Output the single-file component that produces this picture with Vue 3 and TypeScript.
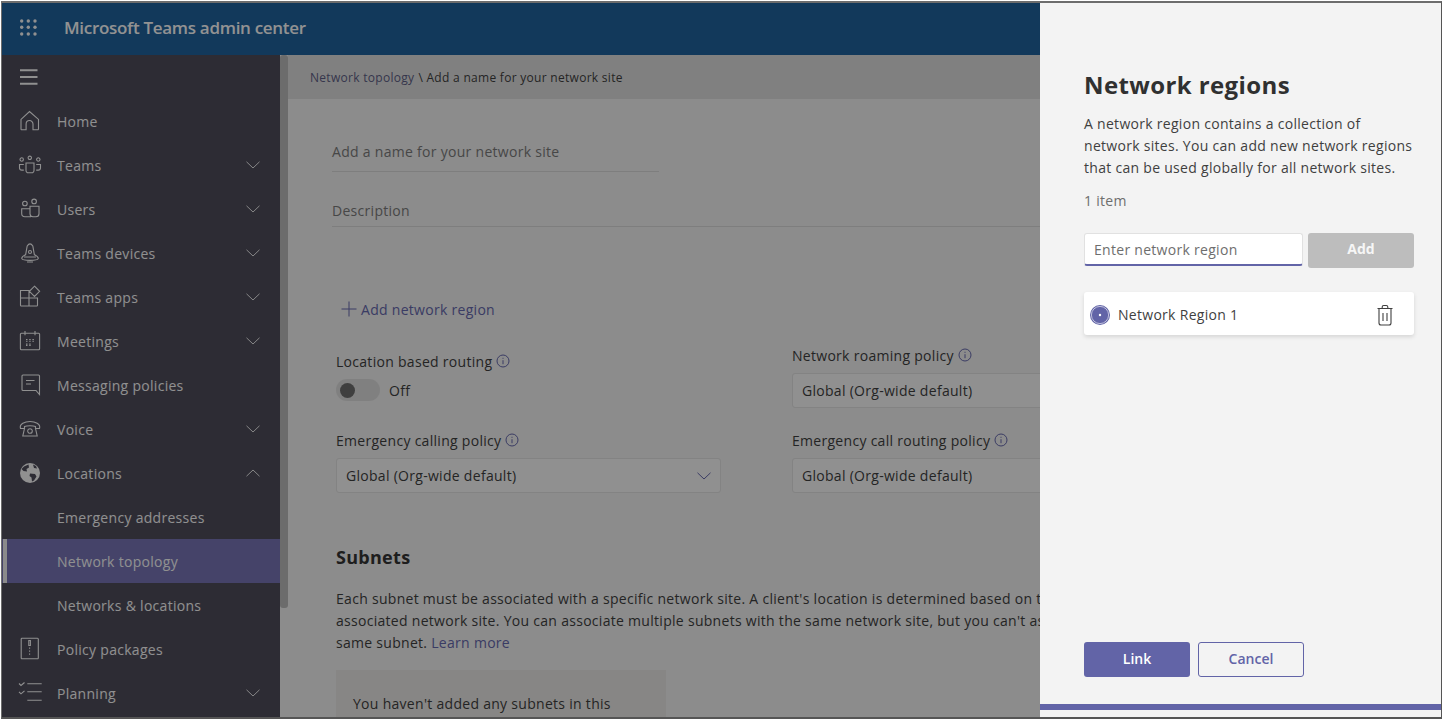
<script setup lang="ts">
import { ref } from 'vue'

interface NavItem {
  label: string
  icon?: string
  chevron?: 'down' | 'up'
  active?: boolean
}

// outline paths on a 24x24 box
const icons: Record<string, string[]> = {
  home: ['M3 20.5V10.4L11.5 2.6 20.5 10.4V20a.8.8 0 0 1-.8.8H15V15a3.4 3.4 0 0 0-6.9 0v5.8H3.8a.8.8 0 0 1-.8-.8Z'],
  teams: [
    'M5.4 6.5a1.7 1.7 0 1 0-3.4 0 1.7 1.7 0 1 0 3.4 0ZM13.5 4.8a1.7 1.7 0 1 0-3.4 0 1.7 1.7 0 1 0 3.4 0ZM22 6.5a1.7 1.7 0 1 0-3.4 0 1.7 1.7 0 1 0 3.4 0Z',
    'M8 10h8v7.5a2.3 2.3 0 0 1-2.3 2.3h-3.4A2.3 2.3 0 0 1 8 17.5ZM5.8 11.5H1.5v3.2a2.4 2.4 0 0 0 2.4 2.4h1.9M18.2 11.5h4.3v3.2a2.4 2.4 0 0 1-2.4 2.4h-1.9',
  ],
  users: [
    'M9.2 6.5a2.3 2.3 0 1 0-4.6 0 2.3 2.3 0 1 0 4.6 0ZM18.4 4.4a2.3 2.3 0 1 0-4.6 0 2.3 2.3 0 1 0 4.6 0Z',
    'M12 9.3h9v7.5a3 3 0 0 1-3 3h-3a3 3 0 0 1-3-3ZM12 11.8H3.7v4.8a3.2 3.2 0 0 0 3.2 3.2H13',
  ],
  devices: [
    'M9.2 5Q12 .8 14.8 5L16.4 13.8Q20.6 15.6 20.2 17.6 19.4 19.4 12 19.4 4.6 19.4 3.8 17.6 3.4 15.6 7.6 13.8Z',
    'M13.5 11a1.5 1.5 0 1 0-3 0 1.5 1.5 0 1 0 3 0ZM6 16h12M9 21h6',
  ],
  apps: ['M2.5 5.5H11v7.5H2.5ZM2.5 13H11v8H3.3a.8.8 0 0 1-.8-.8ZM11 13h8.5v7.2a.8.8 0 0 1-.8.8H11ZM16.5 1.2 21.6 6.3 16.5 11.4 11.4 6.3Z'],
  meetings: [
    'M3.4 4.3h17.2a1 1 0 0 1 1 1v14.4a1 1 0 0 1-1 1H3.4a1 1 0 0 1-1-1V5.300a1 1 0 0 1 1-1ZM7 2v4.200M17 2v4.200',
    'M8 10.500h1.500M11.200 10.500h1.500M14.400 10.500h1.500M8 12.200h1.500M11.200 12.200h1.500M14.400 12.200h1.500M8 15h1.500M11.200 15h1.500M8 16.400h1.500M11.200 16.400h1.500',
  ],
  messaging: ['M5 2h15.500a1 1 0 0 1 1 1V21.500L18 17.500H5a1 1 0 0 1-1-1V3a1 1 0 0 1 1-1ZM8 7.500h8.500M8 11h5'],
  voice: [
    'M2.500 11.500C1 7 7 4.500 12 4.500S23 7 21.500 11.500H17.500V9.500C15 8.500 9 8.500 6.500 9.500V11.500Z',
    'M6.500 11.500 4.800 19H19.200L17.500 11.500',
    'M14.300 14a2.300 2.300 0 1 0-4.600 0 2.300 2.300 0 1 0 4.600 0Z',
  ],
  packages: [
    'M4 1.300H19.500a.8.8 0 0 1 .8.8V21a.8.8 0 0 1-.8.8H4a.8.8 0 0 1-.8-.8V2.100a.8.8 0 0 1 .8-.8Z',
    'M10.800 3.500h1.600v5h-1.600ZM11.600 10.500v1.200M11.600 13.500v1.200M11.600 16.500v1.200',
  ],
  planning: ['M9.300 2.800H23.700M9.300 10.800H23.700M9.300 19.200H23.700M1 2.500l2 2L6.500 1.500M1 10.800l2 2 3.500-3'],
}

const navItems: NavItem[] = [
  { label: 'Home', icon: 'home' },
  { label: 'Teams', icon: 'teams', chevron: 'down' },
  { label: 'Users', icon: 'users', chevron: 'down' },
  { label: 'Teams devices', icon: 'devices', chevron: 'down' },
  { label: 'Teams apps', icon: 'apps', chevron: 'down' },
  { label: 'Meetings', icon: 'meetings', chevron: 'down' },
  { label: 'Messaging policies', icon: 'messaging' },
  { label: 'Voice', icon: 'voice', chevron: 'down' },
  { label: 'Locations', icon: 'globe', chevron: 'up' },
  { label: 'Emergency addresses' },
  { label: 'Network topology', active: true },
  { label: 'Networks & locations' },
  { label: 'Policy packages', icon: 'packages' },
  { label: 'Planning', icon: 'planning', chevron: 'down' },
]

const regionName = ref('')
</script>

<template>
  <div class="frame">
    <header class="topbar">
      <svg class="apps-grid" width="18" height="18" viewBox="0 0 18 18">
        <g v-for="y in [2, 8.300, 15]" :key="y">
          <circle v-for="x in [2.700, 9.300, 16]" :key="x" :cx="x" :cy="y" r="1.700" />
        </g>
      </svg>
      <span class="brand">Microsoft Teams admin center</span>
    </header>

    <div class="body">
      <nav class="sidebar">
        <div class="menu-row">
          <svg width="18" height="16" viewBox="0 0 18 16">
            <path d="M0 1.300h17.500M0 8h17.500M0 14.700h17.500" />
          </svg>
        </div>
        <a v-for="item in navItems" :key="item.label" :class="['nav-item', { active: item.active }]">
          <span class="nav-icon">
            <svg v-if="item.icon === 'globe'" width="24" height="24" viewBox="0 0 24 24">
              <circle class="globe" cx="12" cy="12" r="10" />
              <path class="land" d="M6 5.500 10.500 3.500 11 6.500 8.500 8 9 10.500 5.500 10 3.500 8ZM12 12.500l5 .5 1.500 2.500-2.500 4-2 1-.5-4-2-1.500ZM15 3.500l3 1.500 1 2.500-3-.5Z" />
            </svg>
            <svg v-else-if="item.icon" width="24" height="24" viewBox="0 0 24 24">
              <path v-for="d in icons[item.icon]" :key="d" :d="d" />
            </svg>
          </span>
          <span class="nav-label">{{ item.label }}</span>
          <svg v-if="item.chevron" :class="['chevron', item.chevron]" width="14" height="8" viewBox="0 0 14 8">
            <path d="M.5.800 7 7 13.500.800" />
          </svg>
        </a>
      </nav>
      <div class="side-scroll"><div class="side-thumb"></div></div>

      <main class="content">
        <div class="crumbs">
          <span class="crumb-link">Network topology</span>
          <span>\ Add a name for your network site</span>
        </div>

        <div class="form">
          <div class="line-field name-field">Add a name for your network site</div>
          <div class="line-field desc-field">Description</div>

          <div class="add-region">
            <svg width="16" height="16" viewBox="0 0 16 16"><path d="M8 .5v15M.5 8h15" /></svg>
            <span>Add network region</span>
          </div>

          <div class="settings">
            <div class="routing">
              <label class="field-label">
                Location based routing
                <svg class="info" width="14" height="14" viewBox="0 0 14 14">
                  <circle cx="7" cy="7" r="6" /><path d="M7 6.200v4M7 3.800v1" />
                </svg>
              </label>
              <div class="toggle-row">
                <span class="toggle"><span class="knob"></span></span>
                <span>Off</span>
              </div>
            </div>
            <div>
              <label class="field-label">
                Network roaming policy
                <svg class="info" width="14" height="14" viewBox="0 0 14 14">
                  <circle cx="7" cy="7" r="6" /><path d="M7 6.200v4M7 3.800v1" />
                </svg>
              </label>
              <div class="select">
                <span>Global (Org-wide default)</span>
                <svg width="14" height="8" viewBox="0 0 14 8"><path d="M.5.800 7 7 13.500.800" /></svg>
              </div>
            </div>
            <div>
              <label class="field-label">
                Emergency calling policy
                <svg class="info" width="14" height="14" viewBox="0 0 14 14">
                  <circle cx="7" cy="7" r="6" /><path d="M7 6.200v4M7 3.800v1" />
                </svg>
              </label>
              <div class="select">
                <span>Global (Org-wide default)</span>
                <svg width="14" height="8" viewBox="0 0 14 8"><path d="M.5.800 7 7 13.500.800" /></svg>
              </div>
            </div>
            <div>
              <label class="field-label">
                Emergency call routing policy
                <svg class="info" width="14" height="14" viewBox="0 0 14 14">
                  <circle cx="7" cy="7" r="6" /><path d="M7 6.200v4M7 3.800v1" />
                </svg>
              </label>
              <div class="select">
                <span>Global (Org-wide default)</span>
                <svg width="14" height="8" viewBox="0 0 14 8"><path d="M.5.800 7 7 13.500.800" /></svg>
              </div>
            </div>
          </div>

          <h2 class="subnets-title">Subnets</h2>
          <p class="subnets-text">Each subnet must be associated with a specific network site. A client's location is determined based on the</p>
          <p class="subnets-text">associated network site. You can associate multiple subnets with the same network site, but you can't assign</p>
          <p class="subnets-text">same subnet. <span class="link">Learn more</span></p>

          <div class="empty-box">You haven't added any subnets in this</div>
        </div>
      </main>
    </div>

    <div class="dim"></div>

    <aside class="panel">
      <div class="panel-body">
        <h1 class="panel-title">Network regions</h1>
        <p class="panel-text">A network region contains a collection of network sites. You can add new network regions that can be used globally for all network sites.</p>
        <p class="panel-count">1 item</p>

        <div class="add-row">
          <input v-model="regionName" class="region-input" type="text" placeholder="Enter network region" />
          <button class="add-btn" type="button">Add</button>
        </div>

        <div class="region-card">
          <svg class="radio" width="20" height="20" viewBox="0 0 20 20">
            <circle class="radio-fill" cx="10" cy="10" r="10" />
            <circle class="radio-ring" cx="10" cy="10" r="8.600" />
            <circle class="radio-dot" cx="10" cy="10" r="1.200" />
          </svg>
          <span class="region-name">Network Region 1</span>
          <svg class="trash" width="16" height="22" viewBox="0 0 16 22">
            <path d="M.5 4.500h15M5.200 4.500V3A1.500 1.500 0 0 1 6.700 1.500h2.600A1.500 1.500 0 0 1 10.800 3V4.500M2 4.500V19a2 2 0 0 0 2 2h8a2 2 0 0 0 2-2V4.500M6 9v8M10 9v8" />
          </svg>
        </div>

        <div class="panel-actions">
          <button class="btn primary" type="button">Link</button>
          <button class="btn outline" type="button">Cancel</button>
        </div>
      </div>
      <div class="panel-bar"></div>
    </aside>
  </div>
</template>

<style>
html,
body {
  margin: 0;
  background: #fff;
}
</style>

<style scoped>
.frame {
  position: relative;
  box-sizing: border-box;
  height: 718px;
  margin: 1px 1px 0 1px;
  border-top: 2px solid #6d6d6d;
  border-left: 1px solid #6d6d6d;
  border-right: 1px solid #555;
  border-bottom: 2px solid #555;
  overflow: hidden;
  display: flex;
  flex-direction: column;
  font-family: 'Open Sans', 'Noto Sans', sans-serif;
  font-size: 14px;
  letter-spacing: 0.29px;
  color: #3d3d3d;
}

.topbar {
  flex: none;
  height: 52px;
  display: flex;
  align-items: center;
  background: #1e5f98;
  color: #f4f4f4;
}

.apps-grid {
  margin: 0 0 2px 17px;
  fill: #f0f0f0;
}

.brand {
  margin-left: 27px;
  padding-bottom: 3px;
  font-size: 17px;
  font-weight: 600;
  letter-spacing: -0.3px;
}

.body {
  flex: 1;
  min-height: 0;
  display: flex;
}

.sidebar {
  flex: none;
  width: 278px;
  background: #4b4a58;
  color: #f0f0f0;
}

.menu-row {
  height: 44px;
  display: flex;
  align-items: center;
  padding-left: 18px;
}

.menu-row path {
  fill: none;
  stroke: #f0f0f0;
  stroke-width: 2;
}

.nav-item {
  position: relative;
  height: 44px;
  display: flex;
  align-items: center;
}

.nav-item.active {
  background: #7371b0;
}

.nav-item.active::before {
  content: '';
  position: absolute;
  left: 1px;
  top: 0;
  bottom: 0;
  width: 4px;
  background: #e8e8e8;
}

.nav-icon {
  flex: none;
  width: 24px;
  height: 24px;
  margin-left: 16px;
  margin-right: 15px;
}

.nav-icon svg {
  display: block;
  overflow: visible;
}

.nav-icon path {
  fill: none;
  stroke: #f0f0f0;
  stroke-width: 1.100;
}

.nav-icon .globe {
  fill: #f0f0f0;
}

.nav-icon .land {
  fill: #4b4a58;
  stroke: none;
}

.nav-label {
  flex: 1;
}

.chevron {
  margin-right: 20px;
}

.chevron path,
.select path {
  fill: none;
  stroke: #e0e0e0;
  stroke-width: 1;
}

.chevron.up {
  transform: rotate(180deg);
}

.side-scroll {
  flex: none;
  width: 8px;
  background: #e9e9e9;
}

.side-thumb {
  height: 553px;
  background: #b5b5b5;
  border-radius: 3px;
}

.content {
  flex: 1;
  min-width: 0;
  overflow: hidden;
  background: #e9e9e9;
}

.crumbs {
  height: 44px;
  display: flex;
  align-items: center;
  gap: 4px;
  padding-left: 22px;
  background: #d6d6d6;
  font-size: 12px;
}

.crumb-link {
  color: #5a5b80;
}

.form {
  padding-left: 44px;
}

.line-field {
  box-sizing: border-box;
  display: flex;
  align-items: center;
  padding-bottom: 2px;
  border-bottom: 1px solid #d2d2d2;
  color: #777;
}

.name-field {
  width: 327px;
  height: 39px;
  margin-top: 34px;
}

.desc-field {
  width: 800px;
  height: 30px;
  margin-top: 25px;
}

.add-region {
  display: flex;
  align-items: center;
  gap: 4px;
  height: 20px;
  margin-top: 72px;
  margin-left: 9px;
  color: #6264a7;
}

.add-region path {
  stroke: #6264a7;
  fill: none;
  stroke-width: 1;
}

.settings {
  display: grid;
  grid-template-columns: 385px 385px;
  column-gap: 71px;
  row-gap: 24px;
  margin-top: 26px;
  margin-left: 4px;
  grid-auto-rows: 61px;
}

.routing {
  padding-top: 6px;
}

.field-label {
  display: flex;
  align-items: center;
  gap: 4px;
  height: 20px;
  margin-bottom: 8px;
}

.info circle,
.info path {
  fill: none;
  stroke: #6264a7;
  stroke-width: 1;
}

.toggle-row {
  display: flex;
  align-items: center;
  gap: 9px;
  margin-top: -7px;
  padding-top: 7px;
}

.toggle {
  width: 44px;
  height: 22px;
  border-radius: 11px;
  background: #d6d6d6;
  display: flex;
  align-items: center;
  padding-left: 4px;
  box-sizing: border-box;
}

.knob {
  width: 15px;
  height: 15px;
  border-radius: 50%;
  background: #6a6a6a;
}

.select {
  box-sizing: border-box;
  height: 35px;
  padding: 0 9px 0 9px;
  display: flex;
  align-items: center;
  justify-content: space-between;
  background: #f0f0f0;
  border: 1px solid #dadada;
  border-radius: 3px;
}

.select path {
  stroke: #6264a7;
}

.subnets-title {
  margin: 54px 0 0 4px;
  font-size: 18px;
  line-height: 24px;
  font-weight: 700;
  color: #333;
}

.subnets-text {
  margin: 0 0 0 4px;
  line-height: 22px;
  white-space: nowrap;
}

.subnets-title + .subnets-text {
  margin-top: 19px;
}

.link {
  color: #6264a7;
}

.empty-box {
  box-sizing: border-box;
  width: 330px;
  height: 80px;
  margin: 16px 0 0 4px;
  padding: 23px 17px;
  line-height: 22px;
  background: #e2e0de;
}

.dim {
  position: absolute;
  inset: 0;
  background: rgba(0, 0, 0, 0.4);
}

.panel {
  position: absolute;
  top: 0;
  right: 0;
  bottom: 0;
  width: 401px;
  display: flex;
  flex-direction: column;
  background: #f3f3f3;
  color: #3f3f3f;
}

.panel-body {
  flex: 1;
  min-height: 0;
  display: flex;
  flex-direction: column;
  padding: 66px 27px 27px 44px;
}

.panel-title {
  margin: 0;
  font-size: 24px;
  line-height: 32px;
  font-weight: 700;
  letter-spacing: 0.4px;
  color: #303030;
}

.panel-text {
  margin: 12px 0 0;
  line-height: 22px;
}

.panel-count {
  margin: 11px 0 0;
  line-height: 22px;
  color: #6e6e6e;
}

.add-row {
  display: flex;
  gap: 5px;
  margin-top: 21px;
}

.region-input {
  box-sizing: border-box;
  width: 219px;
  height: 33px;
  padding: 0 9px;
  border: 1px solid #e1e1e1;
  border-bottom: 2px solid #6264a7;
  border-radius: 3px;
  background: #fff;
  outline: none;
  font: inherit;
  letter-spacing: inherit;
}

.region-input::placeholder {
  color: #6e6e6e;
  opacity: 1;
}

.add-btn {
  width: 106px;
  height: 35px;
  padding: 0 0 4px;
  border: 0;
  border-radius: 3px;
  background: #bdbdbd;
  color: #f6f6f6;
  font: inherit;
  font-weight: 700;
}

.region-card {
  box-sizing: border-box;
  height: 43px;
  margin-top: 24px;
  display: flex;
  align-items: center;
  padding: 2px 0 0 6px;
  background: #fff;
  border-radius: 3px;
  box-shadow: 0 2px 4px rgba(0, 0, 0, 0.12);
}

.radio-fill {
  fill: #6264a7;
}

.radio-ring {
  fill: none;
  stroke: #fff;
  stroke-width: 0.600;
}

.radio-dot {
  fill: #fff;
}

.region-name {
  flex: 1;
  margin-left: 8px;
}

.trash {
  margin-right: 21px;
}

.trash path {
  fill: none;
  stroke: #404040;
  stroke-width: 1.100;
}

.panel-actions {
  margin-top: auto;
  display: flex;
  gap: 8px;
}

.btn {
  box-sizing: border-box;
  width: 106px;
  height: 35px;
  padding: 0 0 2px;
  border-radius: 3px;
  font: inherit;
  font-weight: 600;
}

.btn.primary {
  border: 0;
  background: #6264a7;
  color: #fff;
}

.btn.outline {
  border: 1px solid #6264a7;
  background: transparent;
  color: #6264a7;
}

.panel-bar {
  flex: none;
  height: 6px;
  margin-bottom: 7px;
  background: #6264a7;
}
</style>
